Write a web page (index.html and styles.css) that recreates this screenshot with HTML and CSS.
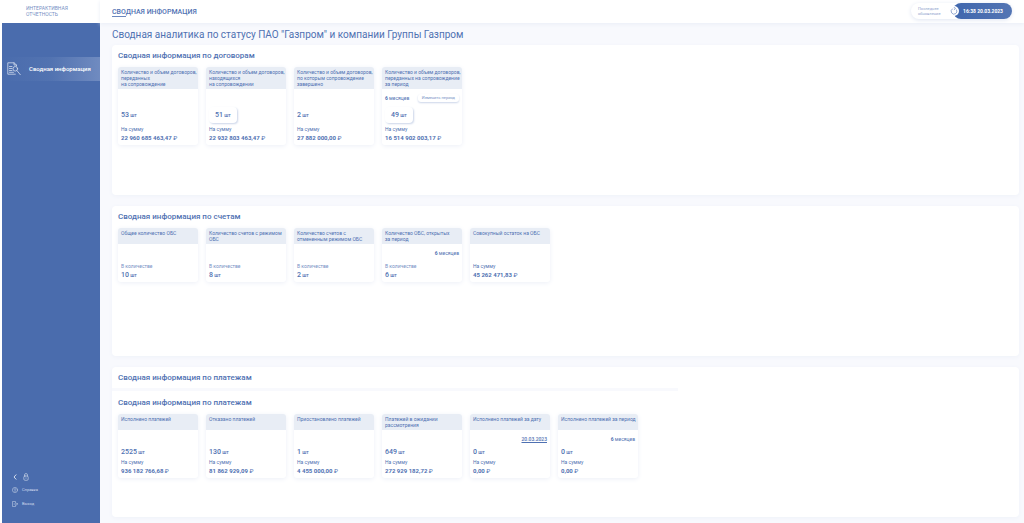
FILE: index.html
```html
<!DOCTYPE html>
<html lang="ru">
<head>
<meta charset="utf-8">
<title>Сводная информация</title>
<link rel="stylesheet" href="styles.css">
</head>
<body>
<div class="app">
  <aside class="side">
    <div class="brand">ИНТЕРАКТИВНАЯ<br>ОТЧЕТНОСТЬ</div>
    <nav class="menu">
      <a class="menu-item" href="#">
        <svg class="menu-icon" viewBox="0 0 14 14"><path d="M9.500 4V3L7 .8H.8v11.400h7.500M7 .8V3h2.500M2.500 4.500h2.500M2.500 6.500h2.500M2.500 8.500h2.500M2.500 10.300h4"/><circle cx="8.300" cy="6.800" r="2.300"/><path d="M10 8.700l3.300 4"/></svg>
        <span>Сводная информация</span>
      </a>
      <div class="menu-foot">
        <div class="foot-row tools">
          <button class="icon-button" aria-label="Свернуть меню"><svg class="chevron" viewBox="0 0 4 6"><path d="M3 .8L1 3l2 2.200"/></svg></button>
          <button class="icon-button" aria-label="Закрепить меню"><svg class="lock" viewBox="0 0 6 8"><rect x=".8" y="3" width="4.400" height="4.300" rx="1.200"/><path d="M1.500 3V2a1.500 1.500 0 0 1 3 0v1M3 4.800v.5"/></svg></button>
        </div>
        <a class="foot-row" href="#"><svg class="foot-icon" viewBox="0 0 6 6"><circle cx="3" cy="3" r="2.600"/><path d="M2.200 2.400c0-1.200 1.700-1.100 1.600 0C3.700 3 3 2.900 3 3.600M3 4.200v.4"/></svg>Справка</a>
        <a class="foot-row" href="#"><svg class="foot-icon" viewBox="0 0 6 6"><path d="M3.500 1.800V.5H.5v5h3V4.200M2 3h3.600M4.600 2l1 1-1 1"/></svg>Выход</a>
      </div>
    </nav>
  </aside>
  <div class="content">
    <header class="top">
      <a class="tab" href="#">СВОДНАЯ ИНФОРМАЦИЯ</a>
      <div class="update">
        <span class="update-label">Последнее<br>обновление</span>
        <button class="refresh" aria-label="Обновить"><svg viewBox="0 0 8 8"><path d="M2.300 1.900a2.900 2.900 0 1 0 4.300 1M4 .4l1.500 1L4.200 2.600"/></svg></button>
        <time class="update-time">16:38 20.03.2023</time>
      </div>
    </header>
    <main class="main">
      <h1>Сводная аналитика по статусу ПАО "Газпром" и компании Группы Газпром</h1>
      <section class="panel">
        <h2>Сводная информация по договорам</h2>
        <div class="cards">
          <article class="card tall">
            <h3>Количество и объем договоров,<br>переданных<br>на сопровождение</h3>
            <div class="body"><div class="count high"><b>53</b> шт</div><div class="label">На сумму</div><div class="sum"><b>22 960 685 463,47</b> ₽</div></div>
          </article>
          <article class="card tall">
            <h3>Количество и объем договоров,<br>находящихся<br>на сопровождении</h3>
            <div class="body"><button class="count high pill"><b>51</b> шт</button><div class="label">На сумму</div><div class="sum"><b>22 932 803 463,47</b> ₽</div></div>
          </article>
          <article class="card tall">
            <h3>Количество и объем договоров,<br>по которым сопровождение<br>завершено</h3>
            <div class="body"><div class="count high"><b>2</b> шт</div><div class="label">На сумму</div><div class="sum"><b>27 882 000,00</b> ₽</div></div>
          </article>
          <article class="card tall">
            <h3>Количество и объем договоров,<br>переданных на сопровождение<br>за период</h3>
            <div class="body"><div class="period spread"><span><b>6</b> месяцев</span><button class="change">Изменить период</button></div><button class="count high pill"><b>49</b> шт</button><div class="label">На сумму</div><div class="sum"><b>16 514 902 003,17</b> ₽</div></div>
          </article>
        </div>
      </section>
      <section class="panel">
        <h2>Сводная информация по счетам</h2>
        <div class="cards">
          <article class="card short">
            <h3>Общее количество ОБС</h3>
            <div class="body"><div class="label quiet">В количестве</div><div class="count"><b>10</b> шт</div></div>
          </article>
          <article class="card short">
            <h3>Количество счетов с режимом<br>ОБС</h3>
            <div class="body"><div class="label quiet">В количестве</div><div class="count"><b>8</b> шт</div></div>
          </article>
          <article class="card short">
            <h3>Количество счетов с<br>отмененным режимом ОБС</h3>
            <div class="body"><div class="label quiet">В количестве</div><div class="count"><b>2</b> шт</div></div>
          </article>
          <article class="card short">
            <h3>Количество ОБС, открытых<br>за период</h3>
            <div class="body"><div class="period"><span><b>6</b> месяцев</span></div><div class="label quiet">В количестве</div><div class="count"><b>6</b> шт</div></div>
          </article>
          <article class="card short">
            <h3>Совокупный остаток на ОБС</h3>
            <div class="body"><div class="label">На сумму</div><div class="sum"><b>45 262 471,83</b> ₽</div></div>
          </article>
        </div>
      </section>
      <section class="panel">
        <h2>Сводная информация по платежам</h2>
        <hr class="divider">
        <h2>Сводная информация по платежам</h2>
        <div class="cards">
          <article class="card">
            <h3>Исполнено платежей</h3>
            <div class="body"><div class="count"><b>2525</b> шт</div><div class="label">На сумму</div><div class="sum"><b>936 182 766,68</b> ₽</div></div>
          </article>
          <article class="card">
            <h3>Отказано платежей</h3>
            <div class="body"><div class="count"><b>130</b> шт</div><div class="label">На сумму</div><div class="sum"><b>81 862 929,09</b> ₽</div></div>
          </article>
          <article class="card">
            <h3>Приостановлено платежей</h3>
            <div class="body"><div class="count"><b>1</b> шт</div><div class="label">На сумму</div><div class="sum"><b>4 455 000,00</b> ₽</div></div>
          </article>
          <article class="card">
            <h3>Платежей в ожидании<br>рассмотрения</h3>
            <div class="body"><div class="count"><b>649</b> шт</div><div class="label">На сумму</div><div class="sum"><b>272 929 182,72</b> ₽</div></div>
          </article>
          <article class="card">
            <h3>Исполнено платежей за дату</h3>
            <div class="body"><div class="period"><a class="date" href="#">20.03.2023</a></div><div class="count"><b>0</b> шт</div><div class="label">На сумму</div><div class="sum"><b>0,00</b> ₽</div></div>
          </article>
          <article class="card">
            <h3>Исполнено платежей за период</h3>
            <div class="body"><div class="period"><span><b>6</b> месяцев</span></div><div class="count"><b>0</b> шт</div><div class="label">На сумму</div><div class="sum"><b>0,00</b> ₽</div></div>
          </article>
        </div>
      </section>
    </main>
  </div>
</div>
</body>
</html>
```
FILE: styles.css
```css
* { box-sizing: border-box; }
body { margin: 0; background: #f8f9fd; color: #4f71b2; font: 5px/6px Roboto, "Open Sans", sans-serif; }
a { color: inherit; text-decoration: none; }
button { margin: 0; padding: 0; border: 0; background: none; color: inherit; font: inherit; cursor: pointer; }
h1, h2, h3 { margin: 0; font-weight: 500; }
b { font-weight: 700; }
svg { display: block; fill: none; stroke: currentColor; stroke-linecap: round; stroke-linejoin: round; }

.app { display: flex; min-height: 100vh; }
.side { display: flex; flex-direction: column; flex: 0 0 100px; padding-left: 2px; background: #fff; }
.brand { height: 23px; padding: 5px 0 0 24px; color: #7690c4; }
.menu { display: flex; flex: 1; flex-direction: column; padding: 34px 0 15px; background: #4a6cad; color: #fff; }
.menu-item { display: flex; align-items: center; gap: 8px; height: 24px; padding-left: 5px; background: linear-gradient(90deg, #4a6cad 0%, #5273b1 50%, #708bc0 100%); font-size: 6px; font-weight: 500; }
.menu-icon { width: 14px; height: 14px; stroke: #d3dded; stroke-width: .8; }
.menu-foot { display: flex; flex-direction: column; gap: 6px; margin-top: auto; padding-left: 10px; color: #d3dded; }
.foot-row { display: flex; align-items: center; gap: 4px; height: 8px; font-size: 4px; }
.tools { gap: 6px; padding-left: 1px; margin-bottom: -1px; }
.foot-icon { width: 6px; height: 6px; stroke-width: .5; }
.chevron { width: 4px; height: 6px; stroke-width: 1; }
.lock { width: 6px; height: 8px; stroke-width: .6; }

.content { display: flex; flex: 1; flex-direction: column; min-width: 0; }
.top { display: flex; justify-content: space-between; align-items: flex-start; height: 23px; padding: 3px 12px 0; background: #fff; box-shadow: 0 1px 4px #e9edf6; }
.tab { margin-top: 5px; font-size: 7px; font-weight: 500; line-height: 8px; }
.tab::after { content: ""; display: block; width: 14px; height: 1px; background: #6b87bf; }
.update { display: flex; align-items: center; height: 16px; border-radius: 8px; background: #fff; box-shadow: 0 1px 4px #dfe5f2; }
.update-label { width: 38px; padding-left: 7px; color: #8ea3cd; font-size: 4px; line-height: 5px; }
.refresh { position: relative; width: 10px; height: 10px; margin-right: -6px; padding: 1px; border-radius: 5px; background: #fff; }
.refresh svg { width: 8px; height: 8px; stroke-width: .6; }
.update-time { padding: 0 9px 0 10px; border-radius: 8px; background: linear-gradient(90deg, #4067ad, #5375b4); color: #fff; font-weight: 700; line-height: 16px; }

.main { flex: 1; padding: 6px 5px 6px 12px; }
h1 { margin-bottom: 4px; font-size: 10px; font-weight: 400; line-height: 12px; }
.panel { min-height: 150px; padding: 6px; border-radius: 4px; background: #fff; box-shadow: 0 1px 4px #eff2f9; }
.panel + .panel { margin-top: 11px; }
h2 { font-size: 8px; font-weight: 500; line-height: 10px; }
.divider { width: 566px; height: 3px; margin: 5px 0 7px -6px; border: 0; background: #f8f9fd; }
.cards { display: flex; flex-wrap: wrap; gap: 8px; margin-top: 6px; }
.card { display: flex; flex-direction: column; width: 80px; min-height: 64px; border-radius: 3px; background: #fff; box-shadow: 0 1px 5px #eceff7; }
.card.tall { min-height: 78px; }
.card.short { min-height: 54px; }
h3 { min-height: 16px; padding: 2px 0 2px 3px; border-radius: 3px 3px 0 0; background: #e8edf5; font-size: 5px; font-weight: 400; line-height: 6px; white-space: nowrap; }
.tall h3 { min-height: 22px; }
.body { display: flex; flex: 1; flex-direction: column; align-items: flex-start; padding: 5px 3px 2px; }
.period { display: flex; align-self: stretch; align-items: center; justify-content: flex-end; line-height: 8px; }
.spread { justify-content: space-between; }
.change { height: 8px; padding: 0 4px; border-radius: 3px; box-shadow: 0 1px 2px #ccd6e9; color: #7690c4; font-size: 4px; }
.date { font-weight: 500; text-decoration: underline; }
.count, .sum { line-height: 10px; }
.count { font-weight: 500; margin-top: auto; margin-bottom: 1px; }
.count b { font-size: 7px; font-weight: 500; }
.sum { font-size: 6px; }
.count.high { margin-bottom: 2px; line-height: 16px; }
.pill { padding: 0 6px; border-radius: 4px; box-shadow: 1px 1px 2px #ccd6e9; }
.label { line-height: 8px; }
.short .label { margin-top: auto; }
.short .count { margin: 0; }
.quiet { color: #7690c4; }
```
